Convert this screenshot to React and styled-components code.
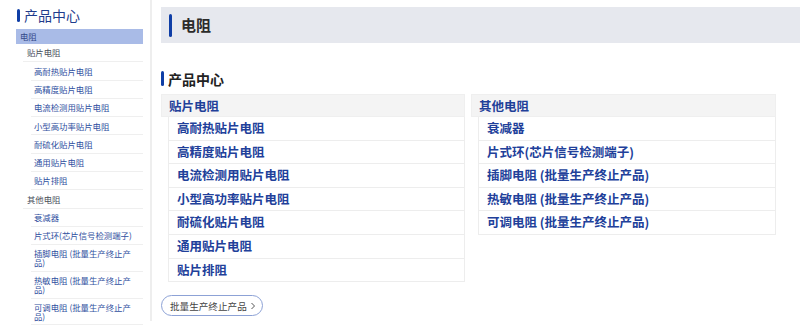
import React from "react";
import styled, { createGlobalStyle } from "styled-components";

const Global = createGlobalStyle`
  html, body { margin: 0; padding: 0; background: #fff; }
  body { font-family: "Noto Sans CJK SC", "Noto Sans", sans-serif; }
  * { box-sizing: border-box; }
`;

const Page = styled.div`
  display: flex;
  align-items: stretch;
  width: 800px;
  height: 325px;
  overflow: hidden;
`;

const Aside = styled.aside`
  width: 152px;
  padding: 7px 7px 0 16px;
  border-right: 2px solid #eeeeee;
  height: 321px;
`;

const SideTitle = styled.div`
  display: flex;
  align-items: center;
  gap: 4px;
  height: 16px;
  margin-left: 1px;
  margin-bottom: 6px;
  font-size: 14px;
  line-height: 16px;
  color: #1f3c8c;
`;

const Bar = styled.span`
  display: block;
  width: ${(p) => p.$w || 3}px;
  height: ${(p) => p.$h}px;
  background: #0f3ea6;
  border-radius: 2px;
  flex: none;
`;

const SideItem = styled.div`
  font-size: 8.4px;
  line-height: 8.5px;
  color: ${(p) => (p.$level === 2 ? "#2f4fa0" : "#4a4f5c")};
  margin-left: ${(p) => (p.$level === 2 ? 15 : p.$level === 1 ? 7 : 0)}px;
  padding: 4.4px 8px 4.4px ${(p) => (p.$level === 2 ? 3 : 4)}px;
  border-bottom: 1px solid #efefef;
`;

const ActiveItem = styled.div`
  font-size: 8.4px;
  line-height: 9px;
  color: #34498a;
  background: #a9bbe7;
  padding: 3px 4px;
`;

const Main = styled.main`
  flex: 1;
  padding: 7px 0 0 9px;
`;

const Header = styled.div`
  display: flex;
  align-items: center;
  gap: 9px;
  height: 36px;
  padding-left: 8px;
  background: #e6e8ee;
`;

const HeaderText = styled.h1`
  margin: 0;
  font-size: 15px;
  font-weight: 700;
  color: #2b2b2b;
  line-height: 20px;
`;

const Heading = styled.div`
  display: flex;
  align-items: center;
  gap: 4px;
  margin-top: 28px;
  height: 15px;
  font-size: 14px;
  font-weight: 700;
  color: #222;
`;

const Cards = styled.div`
  display: grid;
  grid-template-columns: 304px 305px;
  gap: 6px;
  margin-top: 7.5px;
  align-items: start;
`;

const Card = styled.section``;

const CardHead = styled.div`
  height: 23.5px;
  padding-left: 7px;
  background: #f4f4f4;
  border: 1px solid #efefef;
  font-size: 12.5px;
  font-weight: 700;
  line-height: 21.5px;
  color: #1f3f99;
`;

const List = styled.div`
  margin-left: 7px;
`;

const Row = styled.div`
  height: 23.6px;
  padding-left: 8px;
  border: 1px solid #ededed;
  border-top: none;
  font-size: 12.5px;
  font-weight: 700;
  line-height: 22.6px;
  color: #21409a;
`;

const Pill = styled.button`
  display: inline-flex;
  align-items: center;
  gap: 3px;
  margin-top: 13px;
  height: 21px;
  padding: 0 6px 0 8px;
  border: 1px solid #8da2d6;
  border-radius: 11px;
  background: #fff;
  font-family: inherit;
  font-size: 9.6px;
  color: #444;
  cursor: pointer;
`;

const sidebar = [
  { t: "贴片电阻", l: 1 },
  { t: "高耐热贴片电阻", l: 2 },
  { t: "高精度贴片电阻", l: 2 },
  { t: "电流检测用贴片电阻", l: 2 },
  { t: "小型高功率贴片电阻", l: 2 },
  { t: "耐硫化贴片电阻", l: 2 },
  { t: "通用贴片电阻", l: 2 },
  { t: "贴片排阻", l: 2 },
  { t: "其他电阻", l: 1 },
  { t: "衰减器", l: 2 },
  { t: "片式环(芯片信号检测端子)", l: 2 },
  { t: "插脚电阻 (批量生产终止产品)", l: 2 },
  { t: "热敏电阻 (批量生产终止产品)", l: 2 },
  { t: "可调电阻 (批量生产终止产品)", l: 2 },
];

const cards = [
  {
    title: "贴片电阻",
    items: [
      "高耐热贴片电阻",
      "高精度贴片电阻",
      "电流检测用贴片电阻",
      "小型高功率贴片电阻",
      "耐硫化贴片电阻",
      "通用贴片电阻",
      "贴片排阻",
    ],
  },
  {
    title: "其他电阻",
    items: [
      "衰减器",
      "片式环(芯片信号检测端子)",
      "插脚电阻 (批量生产终止产品)",
      "热敏电阻 (批量生产终止产品)",
      "可调电阻 (批量生产终止产品)",
    ],
  },
];

export default function App() {
  return (
    <>
      <Global />
      <Page>
        <Aside>
          <SideTitle>
            <Bar $w={3} $h={13} />
            产品中心
          </SideTitle>
          <ActiveItem>电阻</ActiveItem>
          {sidebar.map((s) => (
            <SideItem key={s.t} $level={s.l}>
              {s.t}
            </SideItem>
          ))}
        </Aside>
        <Main>
          <Header>
            <Bar $w={3} $h={23} />
            <HeaderText>电阻</HeaderText>
          </Header>
          <Heading>
            <Bar $w={3} $h={15} />
            产品中心
          </Heading>
          <Cards>
            {cards.map((c) => (
              <Card key={c.title}>
                <CardHead>{c.title}</CardHead>
                <List>
                  {c.items.map((i) => (
                    <Row key={i}>{i}</Row>
                  ))}
                </List>
              </Card>
            ))}
          </Cards>
          <Pill>
            批量生产终止产品
            <svg width="6" height="8" viewBox="0 0 6 8" fill="none">
              <path d="M1.5 1 L4.5 4 L1.5 7" stroke="#555" strokeWidth="1" />
            </svg>
          </Pill>
        </Main>
      </Page>
    </>
  );
}
